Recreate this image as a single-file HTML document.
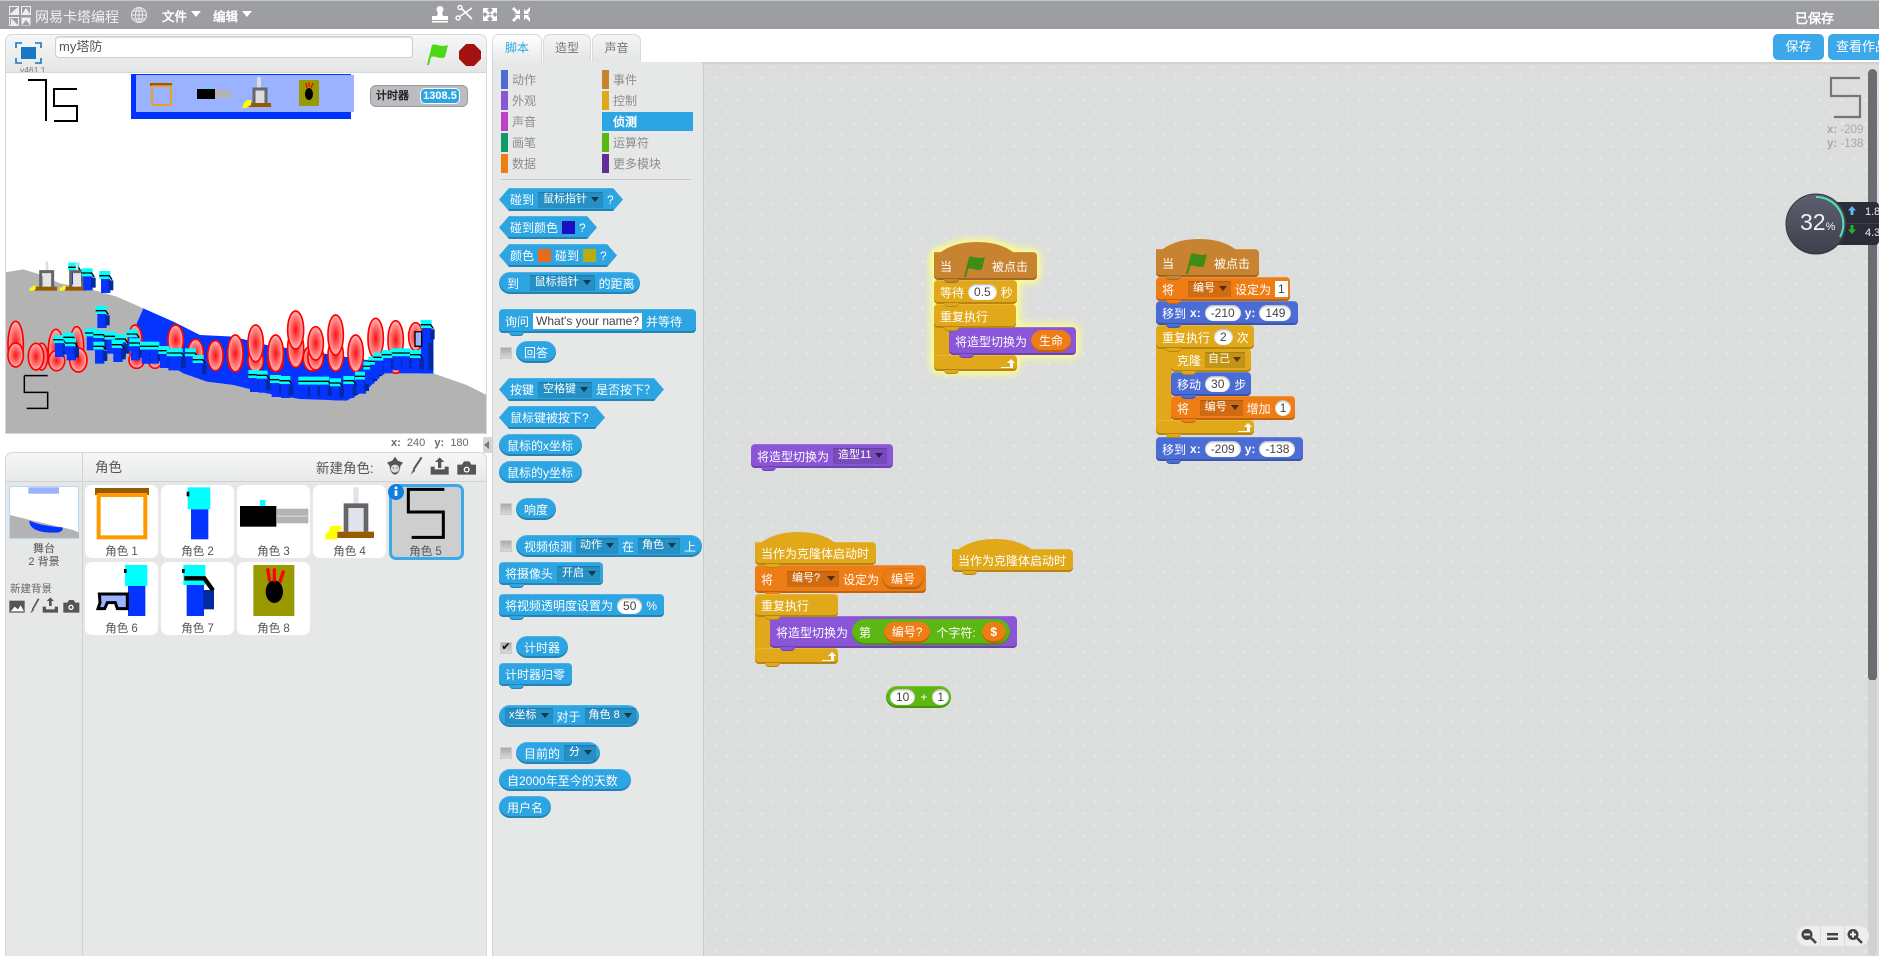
<!DOCTYPE html>
<html><head><meta charset="utf-8"><style>
*{box-sizing:border-box}
html,body{margin:0;padding:0;width:1879px;height:956px;overflow:hidden;background:#fff;font:12px "Liberation Sans","WenQuanYi Zen Hei",sans-serif}
.a{position:absolute;white-space:nowrap}
.b{position:absolute;color:#fff;font-size:12px;display:flex;align-items:center;white-space:nowrap;gap:4px;height:23px;padding-left:6px;box-shadow:inset 0 -2px 0 rgba(0,0,0,.2),inset 0 1px 0 rgba(255,255,255,.15)}
.s{border-radius:4px}
.s:after,.hat:after{content:"";position:absolute;z-index:3;left:10px;bottom:-3px;width:15px;height:4px;background:inherit;border-radius:0 0 4px 4px;box-shadow:inset 0 -1px 0 rgba(0,0,0,.2)}
.r{border-radius:12px;padding-left:8px}
.h{clip-path:polygon(0 50%,10px 0,calc(100% - 10px) 0,100% 50%,calc(100% - 10px) 100%,10px 100%);padding-left:11px}
.hat{border-radius:0 4px 4px 4px}
.hat:before{content:"";position:absolute;left:0;top:-10px;width:86px;height:22px;background:inherit;border-radius:50%/100% 100% 0 0}
.hat span,.hat svg{position:relative}
.m{background:#4a6cd4}.c{background:#e1a91a}.o{background:#ee7d16}.l{background:#8a55d7}.e{background:#c88330}.t{background:#2ca5e2}.g{background:#5cb712}
.n{background:#fff;color:#444;border-radius:9px;height:16px;line-height:16px;padding:0 6px;box-shadow:inset 0 1px 2px rgba(0,0,0,.35)}
.i{background:#fff;color:#444;height:16px;line-height:16px;padding:0 3px}
.d{background:rgba(0,0,0,.13);height:16px;line-height:15px;padding:0 16px 0 5px;font-size:11px;position:relative;box-shadow:inset 0 1px 1px rgba(0,0,0,.15)}
.d:after{content:"";position:absolute;right:4px;top:5px;border:4px solid transparent;border-top:5px solid rgba(0,0,0,.6);border-bottom:0}
.cat{position:absolute;height:19px;line-height:21px;color:#8c8c8c;font-size:12px;white-space:nowrap;padding-left:11px}
.cat i{position:absolute;left:0;top:0;width:7px;height:19px}
.cb{position:absolute;left:500px;width:12px;height:12px;background:linear-gradient(#aaa,#d8d8d8);border:1px solid #ccc}
.tab{position:absolute;top:34px;height:28px;text-align:center;line-height:27px;font-size:12px;color:#777;background:linear-gradient(#f4f4f4,#e4e6e6);border:1px solid #d8d9da;border-bottom:0;border-radius:7px 7px 0 0}
.lab{position:absolute;width:73px;text-align:center;color:#555;font-size:11.5px}
.card{position:absolute;width:73px;height:73px;background:#fff;border-radius:7px}
.gw{position:absolute;background:#ffff90;box-shadow:0 0 8px 3px #ffff88}
</style></head><body>

<!-- top bar -->
<div class="a" style="left:0;top:0;width:1879px;height:29px;background:#9c9ea2;border-top:1px solid #c4c5c7"></div>
<svg class="a" style="left:8px;top:5px" width="24" height="22" viewBox="0 0 24 22"><rect x="1.5" y="1.5" width="9" height="8" fill="none" stroke="#eee"/><rect x="13.5" y="1.5" width="9" height="8" fill="none" stroke="#eee"/><rect x="1.5" y="12.5" width="9" height="8" fill="none" stroke="#eee"/><rect x="13.5" y="12.5" width="9" height="8" fill="#eee"/><path d="M2 9l8-7v7zM14 9l4-6 4 6zM3 13l7 7H3z" fill="#eee"/><path d="M14 20l4-5 4 5z" fill="#9c9ea2"/></svg>
<div class="a" style="left:35px;top:7px;font-size:14px;color:#f2f2f2">网易卡塔编程</div>
<svg class="a" style="left:130px;top:6px" width="18" height="18" viewBox="0 0 18 18" fill="none" stroke="#eee"><circle cx="9" cy="9" r="7.5"/><ellipse cx="9" cy="9" rx="3.5" ry="7.5"/><path d="M9 1.5v15M1.5 9h15M3 5h12M3 13h12"/></svg>
<div class="a" style="left:162px;top:6px;font-size:12.5px;font-weight:bold;color:#fff">文件</div>
<div class="a" style="left:191px;top:11px;border:5px solid transparent;border-top:6px solid #fff;border-bottom:0"></div>
<div class="a" style="left:213px;top:6px;font-size:12.5px;font-weight:bold;color:#fff">编辑</div>
<div class="a" style="left:242px;top:11px;border:5px solid transparent;border-top:6px solid #fff;border-bottom:0"></div>
<svg class="a" style="left:430px;top:5px" width="100" height="18" viewBox="0 0 100 18" fill="#fff"><circle cx="10" cy="4.5" r="3.5"/><path d="M8 7h4l1 4h5v4H2v-4h5zM2 16h16v1.5H2z"/><path d="M29 12L42 3M31 3l11 11" stroke="#fff" stroke-width="1.6" fill="none"/><circle cx="30" cy="2.5" r="2" fill="none" stroke="#fff" stroke-width="1.4"/><circle cx="28" cy="13" r="2" fill="none" stroke="#fff" stroke-width="1.4"/><path d="M53 3h6l-2 2 3 3-2 2-3-3-2 2zM67 3h-6l2 2-3 3 2 2 3-3 2 2zM53 16h6l-2-2 3-3-2-2-3 3-2-2zM67 16h-6l2-2-3-3 2-2 3 3 2-2z"/><path d="M84 2l4 4 2-2v6h-6l2-2-4-4zM100 2l-4 4-2-2v6h6l-2-2 4-4zM84 17l4-4 2 2V9h-6l2 2-4 4zM100 17l-4-4-2 2V9h6l-2 2 4 4z"/></svg>
<div class="a" style="left:1795px;top:8px;font-size:13px;font-weight:bold;color:#fff">已保存</div>

<!-- stage header -->
<div class="a" style="left:5px;top:34px;width:482px;height:39px;background:linear-gradient(#f6f6f6,#e4e6e6);border:1px solid #d8d9da;border-bottom:0;border-radius:7px 7px 0 0"></div>
<svg class="a" style="left:15px;top:42px" width="27" height="22" viewBox="0 0 27 22" fill="none" stroke="#1b76c4" stroke-width="1.6"><path d="M1 6V1h6M20 1h6v5M26 16v5h-6M7 21H1v-5"/><rect x="6" y="5" width="15" height="12" fill="#1b76c4" stroke="none"/></svg>
<div class="a" style="left:20px;top:65px;font-size:8.5px;color:#777">v461.1</div>
<div class="a" style="left:55px;top:36px;width:358px;height:22px;background:#fff;border:1px solid #cfcfcf;border-radius:4px;padding-left:3px;line-height:19px;font-size:13px;color:#555;box-shadow:inset 0 1px 1px #ddd">my塔防</div>
<svg class="a" style="left:425px;top:42px" width="24" height="24" viewBox="0 0 24 24"><path d="M2 23L7 3c4-2 9 3 16 0l-3 12c-5 3-10-2-14 0l-2 8z" fill="#4cd816"/></svg>
<svg class="a" style="left:459px;top:44px" width="22" height="22" viewBox="0 0 22 22"><path d="M7 0h8l7 7v8l-7 7H7l-7-7V7z" fill="#a31110"/></svg>

<!-- stage -->
<svg class="a" style="left:5px;top:72px" width="482" height="362" viewBox="5 72 482 362"><defs>
<radialGradient id="rg"><stop offset="0" stop-color="#ff1010"/><stop offset=".7" stop-color="#ff8080"/><stop offset="1" stop-color="#ffc0c0"/></radialGradient>
<g id="so"><rect x="0" y="0" width="33" height="24" fill="#00ffff"/><rect x="5" y="24" width="28" height="42" fill="#0533ff"/><rect x="28" y="28" width="14" height="30" fill="#002a9e"/><path d="M0 14h30l8 12" stroke="#000" stroke-width="4" fill="none"/></g>
<g id="tw"><rect x="22" y="0" width="8" height="28" fill="#ddd"/><rect x="14" y="30" width="24" height="46" fill="#e4e4e4"/><path d="M7 76V30h36v46" fill="none" stroke="#666" stroke-width="9"/><rect x="-10" y="75" width="66" height="12" fill="#965a00"/><path d="M-28 87l4-10h6l2-5h8v10l-8 5z" fill="#ffff00"/></g>
</defs>
<rect x="5" y="72" width="482" height="362" fill="#fff"/>
<path d="M28 80h18v41M77 89H54v17h23v15H54" fill="none" stroke="#000" stroke-width="2"/>
<rect x="131" y="74" width="220" height="45" fill="#0033ff"/>
<rect x="136" y="75" width="218" height="37" fill="#9ab2ff"/>
<rect x="150" y="83" width="22" height="3" fill="#965a00"/><rect x="152" y="86" width="19" height="19" fill="none" stroke="#ff9900" stroke-width="1.6"/>
<rect x="207" y="86" width="2" height="4" fill="#00ffff"/><rect x="197" y="89" width="18" height="10" fill="#000"/><rect x="215" y="90" width="16" height="8" fill="#b3b3b3"/>
<rect x="257" y="77" width="4" height="11" fill="#ddd"/><path d="M254 103V89h12v14" fill="#ddd" stroke="#666" stroke-width="3"/><rect x="248" y="103" width="23" height="4" fill="#965a00"/><path d="M242 108l2-5 3-3h4v5l-5 3z" fill="#ff0"/>
<rect x="299" y="80" width="20" height="26" fill="#999900"/><ellipse cx="309" cy="94" rx="4" ry="6" fill="#000"/><path d="M306 83l1 5M309 82v5M313 83l-2 5" stroke="#f00" stroke-width="1.3"/>
<g transform="translate(0 240) scale(.33333)">
<path d="M15 97L70 88 110 100 180 130 280 150 350 170 430 205 410 250 430 330 550 400 620 425 700 435 800 460 900 475 1040 480 1100 450 1150 400 1300 400 1400 435 1460 465 1460 580 15 580z" fill="#b3b3b3"/>
<path d="M430 205L520 245 600 285 700 290 800 315 1100 360 1300 330 1300 400 1150 400 1100 450 1040 482 900 477 800 460 700 435 620 425 550 400 430 330 410 250z" fill="#0533ff"/>
<use href="#so" x="205" y="68"/>
<use href="#tw" x="115" y="65"/><use href="#tw" x="205" y="65"/>
<g fill="url(#rg)" stroke="#f00" stroke-width="5">
<ellipse cx="47" cy="312" rx="23" ry="68"/><ellipse cx="47" cy="345" rx="23" ry="36"/>
<ellipse cx="125" cy="350" rx="18" ry="40"/><ellipse cx="108" cy="350" rx="23" ry="40"/>
<ellipse cx="168" cy="330" rx="23" ry="62"/><ellipse cx="170" cy="362" rx="24" ry="30"/>
<ellipse cx="230" cy="320" rx="21" ry="60"/><ellipse cx="235" cy="360" rx="26" ry="36"/>
<ellipse cx="405" cy="305" rx="21" ry="50"/><ellipse cx="410" cy="360" rx="23" ry="25"/>
<ellipse cx="465" cy="350" rx="23" ry="35"/><ellipse cx="527" cy="300" rx="23" ry="45"/><ellipse cx="587" cy="340" rx="23" ry="42"/>
<ellipse cx="646" cy="347" rx="23" ry="45"/><ellipse cx="706" cy="355" rx="23" ry="40"/><ellipse cx="706" cy="340" rx="23" ry="55"/>
<ellipse cx="767" cy="360" rx="23" ry="36"/><ellipse cx="767" cy="310" rx="23" ry="55"/>
<ellipse cx="827" cy="360" rx="23" ry="35"/><ellipse cx="827" cy="340" rx="23" ry="55"/>
<ellipse cx="887" cy="325" rx="24" ry="57"/><ellipse cx="887" cy="270" rx="24" ry="57"/>
<ellipse cx="935" cy="355" rx="25" ry="38"/><ellipse cx="947" cy="350" rx="23" ry="40"/><ellipse cx="947" cy="310" rx="23" ry="50"/>
<ellipse cx="1007" cy="345" rx="23" ry="48"/><ellipse cx="1007" cy="285" rx="23" ry="60"/>
<ellipse cx="1067" cy="340" rx="23" ry="55"/><ellipse cx="1127" cy="295" rx="23" ry="60"/><ellipse cx="1187" cy="365" rx="20" ry="35"/><ellipse cx="1187" cy="300" rx="23" ry="58"/><ellipse cx="1247" cy="290" rx="21" ry="42"/>
</g>
<rect x="1262" y="285" width="38" height="115" fill="#0533ff"/><rect x="1285" y="290" width="15" height="100" fill="#002a9e"/>
<use href="#so" x="245" y="85"/><use href="#so" x="298" y="93"/><use href="#so" x="287" y="198"/>
<use href="#so" x="160" y="285"/><use href="#so" x="190" y="278"/><use href="#so" x="195" y="295"/><use href="#so" x="255" y="265"/><use href="#so" x="280" y="270"/><use href="#so" x="280" y="305"/><use href="#so" x="315" y="275"/><use href="#so" x="345" y="283"/><use href="#so" x="335" y="300"/><use href="#so" x="380" y="268"/><use href="#so" x="388" y="295"/><use href="#so" x="420" y="305"/><use href="#so" x="445" y="305"/><use href="#so" x="475" y="318"/><use href="#so" x="500" y="325"/><use href="#so" x="515" y="325"/><use href="#so" x="555" y="325"/><use href="#so" x="578" y="345"/>
<use href="#so" x="745" y="390"/><use href="#so" x="770" y="392"/><use href="#so" x="810" y="405"/><use href="#so" x="838" y="408"/><use href="#so" x="895" y="410"/><use href="#so" x="925" y="410"/><use href="#so" x="955" y="410"/><use href="#so" x="990" y="415"/><use href="#so" x="1030" y="408"/><use href="#so" x="1065" y="395"/><use href="#so" x="1090" y="365"/><use href="#so" x="1105" y="350"/><use href="#so" x="1120" y="338"/><use href="#so" x="1145" y="330"/><use href="#so" x="1175" y="325"/><use href="#so" x="1200" y="325"/><use href="#so" x="1230" y="330"/><use href="#so" x="1262" y="240"/>
<path d="M1245 275h20v44h-20z" fill="#9ab2ff" stroke="#000" stroke-width="4"/>
<path d="M73 407H143M73 407v50h70v48H80" fill="none" stroke="#000" stroke-width="4.5"/>
</g>
<rect x="5.5" y="72.5" width="481" height="361" fill="none" stroke="#d6d7d8"/>
</svg>
<!-- timer monitor -->
<div class="a" style="left:370px;top:85px;width:98px;height:22px;background:#bbbdc0;border:1px solid #98999c;border-radius:6px;font-size:11px;font-weight:bold;color:#222;line-height:20px;padding-left:5px">计时器</div>
<div class="a" style="left:420px;top:88px;width:40px;height:16px;background:#2ca5e2;border:1px solid #fff;border-radius:5px;color:#fff;font-size:11px;font-weight:bold;line-height:14px;text-align:center">1308.5</div>
<div class="a" style="left:391px;top:437px;font-size:11px;color:#666"><b>x:</b>&nbsp; 240 &nbsp;&nbsp;<b>y:</b>&nbsp; 180</div>

<!-- sprites panel -->
<div class="a" style="left:5px;top:452px;width:482px;height:504px;background:#e6e8e8;border:1px solid #d8d9da;border-bottom:0;border-radius:7px 7px 0 0"></div>
<div class="a" style="left:6px;top:453px;width:480px;height:29px;background:linear-gradient(#f6f6f6,#e8eaea);border-radius:7px 7px 0 0;border-bottom:1px solid #d0d1d2"></div>
<div class="a" style="left:82px;top:453px;width:1px;height:503px;background:#d0d1d2"></div>
<div class="a" style="left:95px;top:456px;font-size:13.5px;color:#555">角色</div>
<div class="a" style="left:316px;top:457px;font-size:13.5px;color:#555">新建角色:</div>
<div class="a" style="left:9px;top:486px;width:70px;height:53px;background:#fff;border:1px solid #b9d7f0"></div>
<div class="card" style="left:85px;top:485px"></div><div class="card" style="left:161px;top:485px"></div><div class="card" style="left:237px;top:485px"></div><div class="card" style="left:313px;top:485px"></div>
<div class="card" style="left:389px;top:484px;width:75px;height:76px;background:#cecece;border:3px solid #3ca8ea"></div>
<div class="card" style="left:85px;top:562px"></div><div class="card" style="left:161px;top:562px"></div><div class="card" style="left:237px;top:562px"></div>
<svg class="a" style="left:0;top:450px" width="490" height="200" viewBox="0 0 1470 600">
<rect x="85" y="112" width="92" height="19" fill="#9ab2ff"/><path d="M30 195l60 15 130 30 17 8v16H30z" fill="#b3b3b3"/><path d="M88 212c20 10 70 20 100 20 2 12-8 16-30 16-40 0-70-10-70-36z" fill="#0533ff"/>
<rect x="285" y="114" width="162" height="21" fill="#965a00"/><rect x="296" y="135" width="140" height="127" fill="none" stroke="#ff9900" stroke-width="12"/>
<rect x="563" y="112" width="68" height="66" fill="#00ffff"/><rect x="573" y="178" width="52" height="90" fill="#0533ff"/><rect x="560" y="125" width="8" height="14" fill="#000"/>
<rect x="780" y="150" width="16" height="18" fill="#00ffff"/><rect x="720" y="168" width="109" height="62" fill="#000"/><rect x="829" y="176" width="96" height="44" fill="#b3b3b3"/><rect x="829" y="197" width="96" height="3" fill="#cfe2f5"/>
<rect x="1060" y="112" width="16" height="50" fill="#e0e4ea"/><path d="M1038 245v-78h60v78" fill="#e0e4ea" stroke="#666" stroke-width="14"/><rect x="1012" y="245" width="110" height="19" fill="#965a00"/><path d="M976 268v-18l10-4 5-18h34v12l-14 4v24z" fill="#ff0"/>
<path d="M1333 118h-108v68h105v76h-95" fill="none" stroke="#000" stroke-width="9"/>
<circle cx="1188" cy="126" r="24" fill="#0f7fdb"/><rect x="1184" y="121" width="8" height="17" fill="#fff"/><rect x="1184" y="110" width="8" height="7" fill="#fff"/>
<rect x="375" y="345" width="67" height="63" fill="#00ffff"/><rect x="384" y="408" width="52" height="90" fill="#0533ff"/><rect x="372" y="357" width="8" height="12" fill="#000"/>
<path d="M298 432h84v44h-30l-6-18h-24l-8 18h-20l6-18z" fill="#9ab2ff" stroke="#000" stroke-width="9"/>
<rect x="550" y="345" width="66" height="60" fill="#00ffff"/><rect x="560" y="405" width="52" height="93" fill="#0533ff"/><rect x="610" y="420" width="32" height="58" fill="#002a9e"/><path d="M553 385h60l26 36" fill="none" stroke="#000" stroke-width="13"/><rect x="546" y="357" width="8" height="12" fill="#000"/>
<rect x="760" y="345" width="123" height="153" fill="#999900"/><ellipse cx="823" cy="425" rx="26" ry="34" fill="#000"/><path d="M803 355l6 40M823 355v40M851 362l-12 36" stroke="#f00" stroke-width="10"/>
<g fill="#555">
<path d="M1185 20l8 12 16 6-8 10c0 14-8 26-16 26s-16-12-16-26l-8-10 16-6z"/><ellipse cx="1185" cy="56" rx="13" ry="12" fill="#ddd"/><circle cx="1180" cy="54" r="2"/><circle cx="1191" cy="54" r="2"/>
<path d="M1265 22l-24 36" stroke="#555" stroke-width="6" fill="none"/><path d="M1241 56l-9 18 14-12z"/>
<path d="M1292 50h12v8h30v-8h12v24h-54z"/><path d="M1319 22l14 14h-9v18h-10V36h-9z"/>
<path d="M1372 44h14l6-10h16l6 10h14v30h-56z"/>
<path d="M28 452h46v36H28z"/><path d="M116 446l-18 32" stroke="#555" stroke-width="5" fill="none"/><path d="M98 476l-8 14 12-9z"/><path d="M128 470h10v8h26v-8h10v18h-46z"/><path d="M151 442l11 11h-7v15h-8v-15h-7z"/><path d="M190 458h12l5-8h14l5 8h12v30h-48z"/></g>
<g fill="#fff"><circle cx="1400" cy="59" r="9"/><circle cx="213" cy="472" r="8"/><path d="M32 484l12-14 10 8 8-12 10 18z"/></g><circle cx="1400" cy="59" r="5" fill="#555"/><circle cx="213" cy="472" r="4" fill="#555"/>
</svg>
<div class="a" style="left:9px;top:543px;width:70px;text-align:center;font-size:11px;color:#555;line-height:13px">舞台<br>2 背景</div>
<div class="a" style="left:10px;top:581px;font-size:10.5px;color:#666">新建背景</div>
<div class="lab" style="left:85px;top:543px">角色 1</div><div class="lab" style="left:161px;top:543px">角色 2</div><div class="lab" style="left:237px;top:543px">角色 3</div><div class="lab" style="left:313px;top:543px">角色 4</div><div class="lab" style="left:389px;top:543px">角色 5</div>
<div class="lab" style="left:85px;top:620px">角色 6</div><div class="lab" style="left:161px;top:620px">角色 7</div><div class="lab" style="left:237px;top:620px">角色 8</div>
<div class="a" style="left:483px;top:437px;width:9px;height:16px;background:#d4d5d6;border-radius:2px 0 0 2px"></div>
<div class="a" style="left:484px;top:441px;border:4px solid transparent;border-right:5px solid #777;border-left:0"></div>

<!-- palette -->
<div class="a" style="left:492px;top:62px;width:211px;height:894px;background:#e6e8e8;border-left:1px solid #d0d1d2"></div>
<div class="a" style="left:702px;top:62px;width:1177px;height:4px;background:linear-gradient(#ccc,#e0e0e0)"></div>
<div class="tab" style="left:543px;width:48px">造型</div>
<div class="tab" style="left:592px;width:49px">声音</div>
<div class="tab" style="left:492px;width:50px;height:30px;color:#2ca5e2;background:linear-gradient(#fff,#e6e8e8);z-index:2">脚本</div>
<div class="cat" style="left:501px;top:70px"><i style="background:#4a6cd4"></i>动作</div>
<div class="cat" style="left:501px;top:91px"><i style="background:#8a55d7"></i>外观</div>
<div class="cat" style="left:501px;top:112px"><i style="background:#bb42c3"></i>声音</div>
<div class="cat" style="left:501px;top:133px"><i style="background:#0e9a6c"></i>画笔</div>
<div class="cat" style="left:501px;top:154px"><i style="background:#ee7d16"></i>数据</div>
<div class="cat" style="left:602px;top:70px"><i style="background:#c88330"></i>事件</div>
<div class="cat" style="left:602px;top:91px"><i style="background:#e1a91a"></i>控制</div>
<div class="cat" style="left:602px;top:112px;width:91px;background:#2ca5e2;color:#fff;font-weight:bold"><i style="background:#2ca5e2"></i>侦测</div>
<div class="cat" style="left:602px;top:133px"><i style="background:#5cb712"></i>运算符</div>
<div class="cat" style="left:602px;top:154px"><i style="background:#632d99"></i>更多模块</div>
<div class="a" style="left:501px;top:179px;width:190px;height:1px;background:#c8c8c8"></div>

<div class="b h t" style="left:499px;top:188px;width:124px">碰到<span class="d">鼠标指针</span><span>?</span></div>
<div class="b h t" style="left:499px;top:216px;width:98px">碰到颜色<span style="width:13px;height:13px;background:#1a0fc4"></span><span>?</span></div>
<div class="b h t" style="left:499px;top:244px;width:118px">颜色<span style="width:13px;height:13px;background:#e8691a"></span>碰到<span style="width:13px;height:13px;background:#b8ad10"></span><span>?</span></div>
<div class="b r t" style="left:499px;top:272px;width:141px;height:22px">到&nbsp;&nbsp;<span class="d">鼠标指针</span>的距离</div>
<div class="b s t" style="left:499px;top:309px;width:197px;height:24px">询问<span class="i" style="font-size:12px">What's your name?</span>并等待</div>
<div class="cb" style="top:347px"></div>
<div class="b r t" style="left:516px;top:341px;width:40px;height:22px">回答</div>
<div class="b h t" style="left:499px;top:378px;width:165px">按键<span class="d">空格键</span>是否按下？</div>
<div class="b h t" style="left:499px;top:406px;width:106px">鼠标键被按下?</div>
<div class="b r t" style="left:499px;top:434px;width:83px;height:22px">鼠标的x坐标</div>
<div class="b r t" style="left:499px;top:461px;width:83px;height:22px">鼠标的y坐标</div>
<div class="cb" style="top:503px"></div>
<div class="b r t" style="left:516px;top:498px;width:40px;height:22px">响度</div>
<div class="cb" style="top:540px"></div>
<div class="b r t" style="left:516px;top:535px;width:186px;height:22px">视频侦测<span class="d" style="padding-left:4px">动作</span>在<span class="d" style="padding-left:4px">角色</span>上</div>
<div class="b s t" style="left:499px;top:562px;width:104px">将摄像头<span class="d">开启</span></div>
<div class="b s t" style="left:499px;top:594px;width:165px">将视频透明度设置为<span class="n">50</span>%</div>
<div class="cb" style="top:642px;font-size:11px;line-height:9px;color:#000;text-align:center">✔</div>
<div class="b r t" style="left:516px;top:636px;width:52px;height:22px">计时器</div>
<div class="b s t" style="left:499px;top:663px;width:73px">计时器归零</div>
<div class="b r t" style="left:499px;top:705px;width:140px;height:22px;padding-left:6px"><span class="d" style="padding-left:4px">x坐标</span>对于<span class="d" style="padding-left:4px">角色 8</span></div>
<div class="cb" style="top:747px"></div>
<div class="b r t" style="left:516px;top:742px;width:84px;height:22px">目前的<span class="d">分</span></div>
<div class="b r t" style="left:499px;top:769px;width:132px;height:22px">自2000年至今的天数</div>
<div class="b r t" style="left:499px;top:796px;width:52px;height:22px">用户名</div>

<!-- scripts area -->
<div class="a" style="left:703px;top:66px;width:1176px;height:890px;background-color:#dcdede;border-left:1px solid #c8c9ca;background-image:radial-gradient(circle 1.5px,#e4e6e6 100%,transparent),radial-gradient(circle 1.5px,#e4e6e6 100%,transparent);background-size:23px 23px;background-position:0 0,11.5px 11.5px"></div>

<!-- save buttons -->
<div class="a" style="left:1773px;top:34px;width:51px;height:26px;background:#3ca8ea;border-radius:5px;color:#fff;font-size:13px;line-height:26px;text-align:center">保存</div>
<div class="a" style="left:1828px;top:34px;width:60px;height:26px;background:#3ca8ea;border-radius:5px;color:#fff;font-size:13px;line-height:26px;padding-left:8px;overflow:hidden">查看作品</div>

<!-- Group A glow -->
<div class="gw" style="left:934px;top:242px;width:86px;height:22px;border-radius:50%/100% 100% 0 0"></div>
<div class="gw" style="left:934px;top:252px;width:103px;height:28px;border-radius:4px"></div>
<div class="gw" style="left:934px;top:280px;width:83px;height:48px;border-radius:4px"></div>
<div class="gw" style="left:934px;top:328px;width:16px;height:30px"></div>
<div class="gw" style="left:934px;top:355px;width:83px;height:16px;border-radius:4px"></div>
<div class="gw" style="left:949px;top:327px;width:127px;height:28px;border-radius:4px"></div>
<!-- Group A -->
<div class="b hat e" style="left:934px;top:252px;width:103px;height:28px"><span>当</span><svg width="24" height="24" viewBox="0 0 24 24" style="margin:0 2px 0 6px"><path d="M2 23L7 3c4-2 9 3 16 0l-3 12c-5 3-10-2-14 0l-2 8z" fill="#3f8c14"/></svg><span>被点击</span></div>
<div class="b s c" style="left:934px;top:280px;width:83px;height:24px">等待<span class="n">0.5</span>秒</div>
<div class="a c" style="left:934px;top:320px;width:16px;height:40px"></div>
<div class="b s c" style="left:934px;top:355px;width:83px;height:16px"></div>
<div class="b s c" style="left:934px;top:304px;width:82px;height:24px;z-index:2">重复执行</div>
<div class="b s l" style="left:949px;top:327px;width:127px;height:28px;padding-left:6px">将造型切换为<span class="n" style="color:#fff;background:#ee7d16;height:22px;line-height:22px;border-radius:11px;padding:0 8px;box-shadow:inset 0 -2px 0 rgba(0,0,0,.2)">生命</span></div>
<svg class="a" style="left:1001px;top:359px;z-index:4" width="14" height="10" viewBox="0 0 14 10"><path d="M0 8h9V4H6l4-4 4 4h-2v5H0z" fill="#fff"/></svg>

<!-- Group B -->
<div class="b hat e" style="left:1156px;top:249px;width:103px;height:28px"><span>当</span><svg width="24" height="24" viewBox="0 0 24 24" style="margin:0 2px 0 6px"><path d="M2 23L7 3c4-2 9 3 16 0l-3 12c-5 3-10-2-14 0l-2 8z" fill="#3f8c14"/></svg><span>被点击</span></div>
<div class="b s o" style="left:1156px;top:277px;width:134px;height:24px">将&nbsp;&nbsp;&nbsp;<span class="d">编号</span>设定为<span class="i">1</span></div>
<div class="b s m" style="left:1156px;top:301px;width:142px;height:24px">移到 <b>x:</b><span class="n">-210</span><b>y:</b><span class="n">149</span></div>
<div class="a c" style="left:1156px;top:340px;width:16px;height:90px"></div>
<div class="b s c" style="left:1156px;top:420px;width:98px;height:15px"></div>
<div class="b s c" style="left:1156px;top:325px;width:98px;height:24px;z-index:2">重复执行<span class="n">2</span>次</div>
<div class="b s c" style="left:1171px;top:348px;width:80px;height:24px">克隆<span class="d" style="padding-left:3px;width:40px">自己</span></div>
<div class="b s m" style="left:1171px;top:372px;width:80px;height:24px">移动<span class="n">30</span>步</div>
<div class="b s o" style="left:1171px;top:396px;width:124px;height:24px">将&nbsp;&nbsp;<span class="d">编号</span>增加<span class="n" style="padding:0 5px">1</span></div>
<svg class="a" style="left:1238px;top:423px;z-index:4" width="14" height="10" viewBox="0 0 14 10"><path d="M0 8h9V4H6l4-4 4 4h-2v5H0z" fill="#fff"/></svg>
<div class="b s m" style="left:1156px;top:437px;width:147px;height:24px">移到 <b>x:</b><span class="n">-209</span><b>y:</b><span class="n">-138</span></div>

<!-- Orphans -->
<div class="b s l" style="left:751px;top:444px;width:142px;height:24px;padding-left:6px">将造型切换为<span class="d">造型11</span></div>

<!-- Group C -->
<div class="b hat c" style="left:755px;top:542px;width:121px;height:23px"><span>当作为克隆体启动时</span></div>
<div class="b s o" style="left:755px;top:565px;width:171px;height:28px;z-index:1">将&nbsp;&nbsp;&nbsp;<span class="d" style="width:52px">编号?</span>设定为<span class="n" style="background:#ee7d16;color:#fff;height:20px;line-height:20px;border-radius:10px;padding:0 8px;box-shadow:inset 0 -2px 0 rgba(0,0,0,.2),0 0 0 1px rgba(0,0,0,.08)">编号</span></div>
<div class="a c" style="left:755px;top:610px;width:16px;height:45px"></div>
<div class="b s c" style="left:755px;top:648px;width:83px;height:16px"></div>
<div class="b s c" style="left:755px;top:594px;width:83px;height:23px;z-index:2">重复执行</div>
<div class="b s l" style="left:770px;top:616px;width:247px;height:32px;padding-left:6px">将造型切换为<span style="background:#5cb712;border-radius:13px;height:26px;width:158px;display:flex;align-items:center;gap:6px;padding-left:7px;box-shadow:inset 0 -2px 0 rgba(0,0,0,.2)">第 &nbsp;<span style="background:#ee7d16;height:21px;line-height:21px;border-radius:11px;padding:0 8px;box-shadow:inset 0 -2px 0 rgba(0,0,0,.2)">编号?</span>个字符:<span style="background:#ee7d16;width:24px;height:21px;line-height:21px;border-radius:11px;text-align:center;font-weight:bold;box-shadow:inset 0 -2px 0 rgba(0,0,0,.2)">$</span></span></div>
<svg class="a" style="left:822px;top:652px;z-index:4" width="14" height="10" viewBox="0 0 14 10"><path d="M0 8h9V4H6l4-4 4 4h-2v5H0z" fill="#fff"/></svg>
<div class="b hat c" style="left:952px;top:549px;width:121px;height:23px"><span>当作为克隆体启动时</span></div>
<div class="b r g" style="left:886px;top:686px;width:65px;height:22px;padding-left:4px;gap:5px"><span class="n">10</span>+<span class="n" style="padding:0 5px">1</span></div>

<!-- thumbnail/right side -->
<svg class="a" style="left:1825px;top:72px" width="40" height="50" viewBox="0 0 40 50"><path d="M35 6H6v18h29v21H9" fill="none" stroke="#757575" stroke-width="2.2"/></svg>
<div class="a" style="left:1827px;top:123px;font-size:11.5px;color:#a8a8a8;line-height:14px"><b>x:</b>&nbsp;-209<br><b>y:</b>&nbsp;-138</div>
<div class="a" style="left:1868px;top:69px;width:9px;height:612px;background:#6c6d72;border-radius:5px"></div>
<div class="a" style="left:1868px;top:680px;width:9px;height:276px;background:#d0d1d1;border-radius:0 0 5px 5px"></div>
<div class="a" style="left:1830px;top:202px;width:49px;height:43px;background:#2a2d38;border-radius:0 4px 4px 0"></div>
<div class="a" style="left:1840px;top:223px;width:39px;height:1px;background:#3c3f4c"></div>
<svg class="a" style="left:1848px;top:206px" width="8" height="34" viewBox="0 0 8 34"><path d="M4 0l4 4.500H5.500V9h-3V4.500H0z" fill="#58b8f2"/><path d="M4 28l4-4.500H5.500V19h-3v4.500H0z" fill="#22b022"/></svg>
<div class="a" style="left:1865px;top:206px;font-size:11px;color:#eee">1.8</div>
<div class="a" style="left:1865px;top:227px;font-size:11px;color:#eee">4.3</div>
<svg class="a" style="left:1785px;top:193px" width="62" height="62" viewBox="0 0 62 62"><defs><linearGradient id="gg" x1="0" y1="0" x2="0" y2="1"><stop offset="0" stop-color="#5d6070"/><stop offset="1" stop-color="#3e404d"/></linearGradient></defs><circle cx="31" cy="31" r="30" fill="url(#gg)" stroke="#33343e"/><path d="M31 4a27 27 0 0 1 24 40" fill="none" stroke="#4fe0c0" stroke-width="2"/></svg>
<div class="a" style="left:1800px;top:209px;font-size:23px;color:#f2f2f2">32<span style="font-size:11px">%</span></div>

<!-- zoom -->
<div class="a" style="left:1797px;top:926px;width:72px;height:20px;background:#eeeeee;border-radius:10px"></div>
<div class="a" style="left:1820px;top:926px;width:1px;height:20px;background:#dadada"></div>
<div class="a" style="left:1844px;top:926px;width:1px;height:20px;background:#dadada"></div>
<svg class="a" style="left:1797px;top:926px" width="72" height="20" viewBox="0 0 72 20"><circle cx="10" cy="8.5" r="5.5" fill="#444"/><path d="M14 12l5 5" stroke="#444" stroke-width="2.600"/><rect x="7" y="7.500" width="6" height="2" fill="#eee"/><path d="M30 7h11v2.500H30zM30 11.500h11V14H30z" fill="#444"/><circle cx="56" cy="8.500" r="5.500" fill="#444"/><path d="M60 12l5 5" stroke="#444" stroke-width="2.600"/><path d="M53 7.500h6v2h-6zM55 5.500h2v6h-2z" fill="#eee"/></svg>
</body></html>
